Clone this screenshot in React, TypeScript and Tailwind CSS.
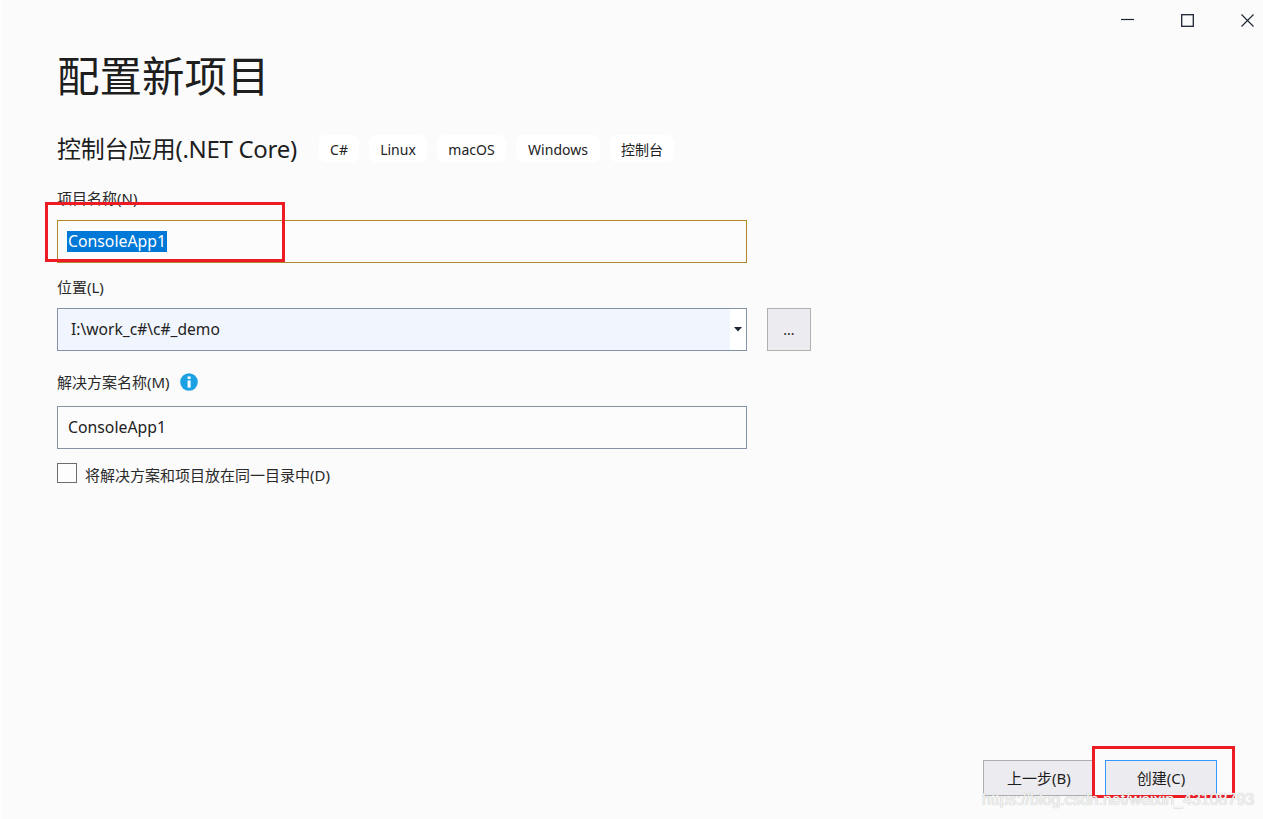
import React from 'react';

const font = { fontFamily: '"Noto Sans", "Noto Sans CJK SC", sans-serif' };

const tags = [
  { label: 'C#', w: 'w-[40px]' },
  { label: 'Linux', w: 'w-[58px]' },
  { label: 'macOS', w: 'w-[69px]' },
  { label: 'Windows', w: 'w-[84px]' },
  { label: '控制台', w: 'w-[64px]' },
];

const Label = ({ children, className = '' }: { children: React.ReactNode; className?: string }) => (
  <div className={`h-[20px] flex items-center text-[15px] leading-[20px] text-[#2a2a2a] ${className}`}>{children}</div>
);

export default function App() {
  return (
    <div style={font} className="relative w-[1263px] h-[819px] overflow-hidden bg-[#fbfbfb] border-l-2 border-l-[#fefefe] text-[#1e1e1e]">
      <div className="flex justify-end h-[40px] pr-[9px] pt-[14px]">
        <svg width="13" height="13" viewBox="0 0 13 13" className="mr-[47px]" fill="none" stroke="#1c2333" strokeWidth="1.2">
          <path d="M0 5.5H13" />
        </svg>
        <svg width="13" height="13" viewBox="0 0 13 13" className="mr-[47px]" fill="none" stroke="#1c2333" strokeWidth="1.3">
          <rect x="0.7" y="0.7" width="11.6" height="11.6" />
        </svg>
        <svg width="13" height="13" viewBox="0 0 13 13" fill="none" stroke="#1c2333" strokeWidth="1.1">
          <path d="M0.5 0.5L12.5 12.5M12.5 0.5L0.5 12.5" />
        </svg>
      </div>

      <div className="pl-[55px]">
        <h1 className="h-[72px] text-[42.5px] leading-[72px] font-normal text-[#1e1e1e] whitespace-nowrap">配置新项目</h1>

        <div className="flex items-center h-[27px] mt-[23px]">
          <div className="w-[262px] text-[24px] leading-[27px] whitespace-nowrap tracking-[-0.3px]">控制台应用(.NET Core)</div>
          <div className="flex gap-[10px]">
            {tags.map(t => (
              <span key={t.label} className={`${t.w} h-[27px] pt-[1px] flex items-center justify-center rounded-[7px] bg-white text-[14px] text-[#222]`}>{t.label}</span>
            ))}
          </div>
        </div>

        <Label className="mt-[26px]">项目名称(N)</Label>
        <div className="mt-[12px] w-[690px] h-[43px] flex items-center pl-[9px] border border-[#b08828] bg-[#fcfcfc] text-[15.8px]">
          <span className="bg-[#0078d7] text-white px-[1px] pb-[1px] leading-[18px] h-[21px] flex items-center">ConsoleApp1</span>
        </div>

        <Label className="mt-[14px]">位置(L)</Label>
        <div className="mt-[11px] flex items-center">
          <div className="w-[690px] h-[43px] flex border border-[#8492a6] bg-white text-[15.6px]">
            <div className="flex-1 flex items-center pl-[13px] bg-[#f1f5fe] text-[#222]">I:\work_c#\c#_demo</div>
            <div className="w-[16px] flex items-center justify-center">
              <svg width="8" height="5" viewBox="0 0 8 5"><path d="M0 0H8L4 4.5Z" fill="#1c2333" /></svg>
            </div>
          </div>
          <div className="ml-[20px] w-[44px] h-[43px] flex items-center justify-center border border-[#b0b0b0] bg-[#ecebef] text-[14px] text-[#222]">...</div>
        </div>

        <div className="mt-[21px] h-[20px] flex items-center gap-[10px]">
          <Label>解决方案名称(M)</Label>
          <svg width="18" height="18" viewBox="0 0 18 18">
            <circle cx="9" cy="9" r="8.8" fill="#1ba1e2" />
            <rect x="7.6" y="7.4" width="3" height="7.2" fill="#fff" />
            <rect x="7.6" y="3.4" width="3" height="2.6" fill="#fff" />
          </svg>
        </div>
        <div className="mt-[14px] w-[690px] h-[43px] flex items-center pl-[10px] border border-[#8492a6] bg-[#fcfcfc] text-[15.8px] text-[#222]">ConsoleApp1</div>

        <div className="mt-[14px] flex items-center h-[20px]">
          <div className="w-[20px] h-[20px] border border-[#6d6d6d] bg-[#fdfdfd]" />
          <span className="ml-[8px] mt-[4px] text-[15px] text-[#2a2a2a]">将解决方案和项目放在同一目录中(D)</span>
        </div>
      </div>

      <div className="absolute right-[46px] top-[760px] flex gap-[10px] text-[15px] text-[#1e1e1e]">
        <button className="w-[112px] h-[36px] border border-[#adadad] bg-[#ecebef]">上一步(B)</button>
        <button className="w-[112px] h-[36px] border border-[#3399ff] bg-[#ecebef]">创建(C)</button>
      </div>

      <div className="absolute left-[43px] top-[202px] w-[240px] h-[60px] border-[3px] border-[#ed1c24]" />
      <div className="absolute left-[1090px] top-[746px] w-[143px] h-[52px] border-[3px] border-[#ed1c24]" />

      <div
        style={{ fontFamily: '"Liberation Sans", sans-serif' }}
        className="absolute left-[980px] top-[790px] text-[16px] leading-[20px] whitespace-nowrap text-[#f4f4f4] [text-shadow:0_0_1px_#a8a8a8]"
      >
        https://blog.csdn.net/weixin_43108793
      </div>
    </div>
  );
}
